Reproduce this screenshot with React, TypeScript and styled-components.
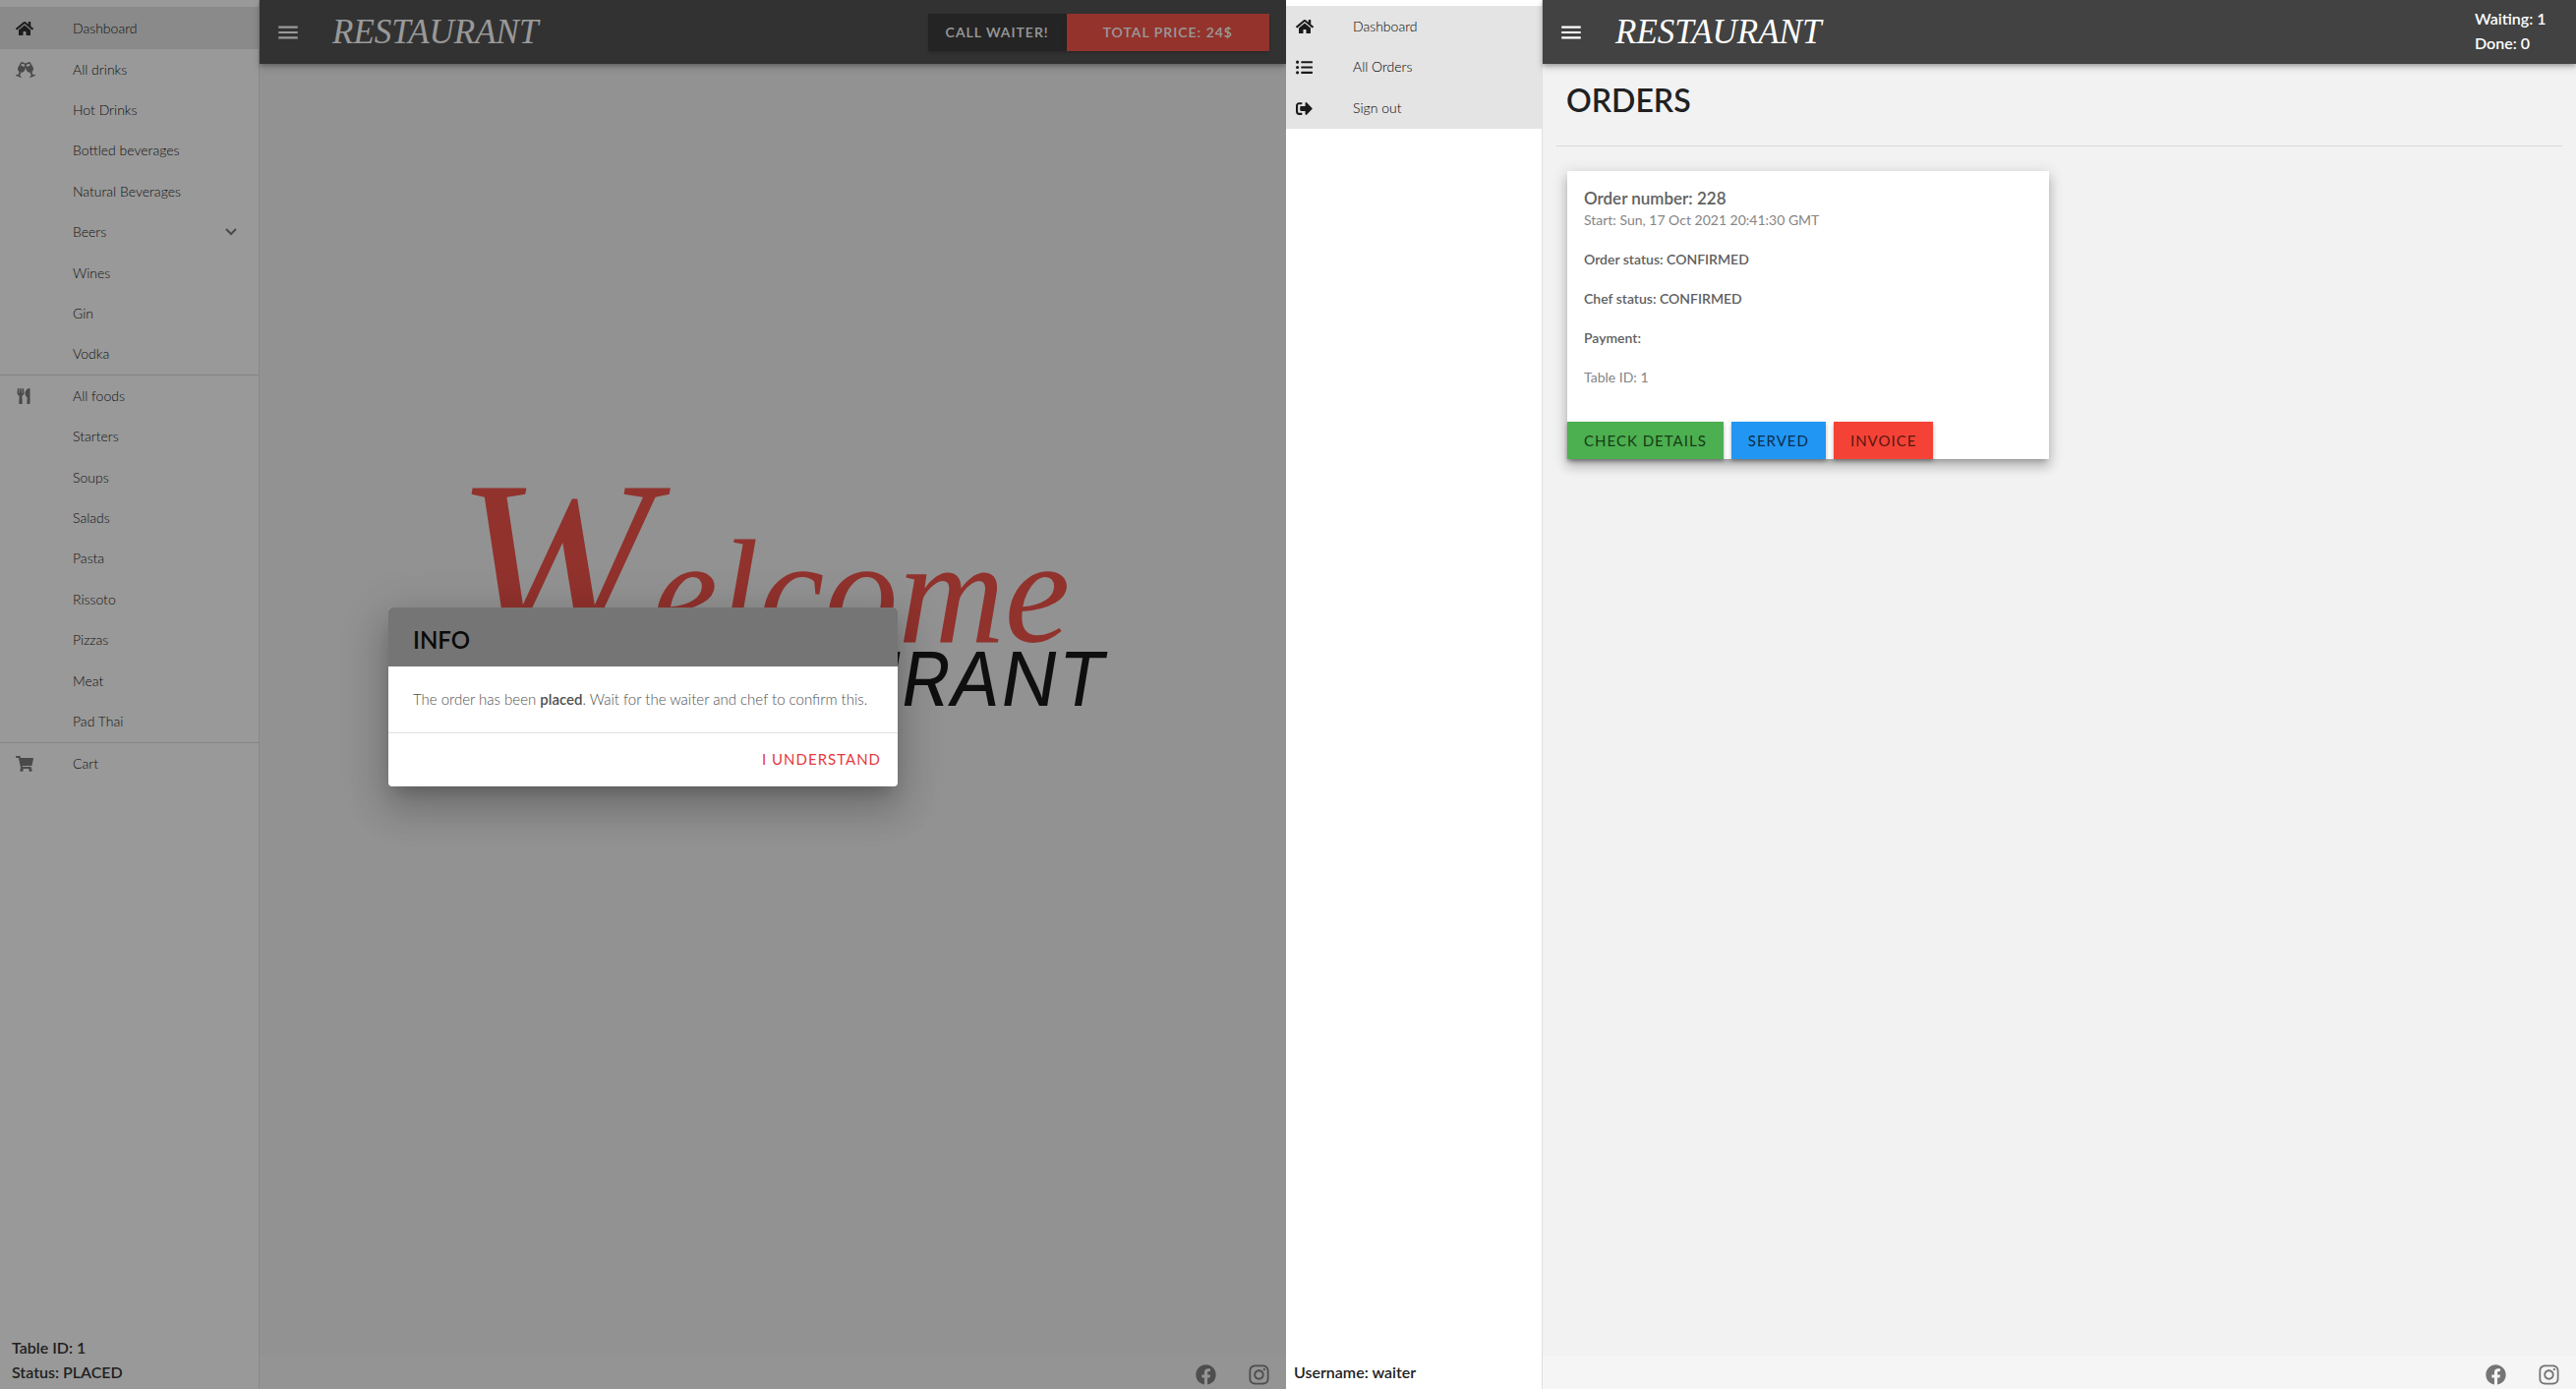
import React from "react";
import styled, { createGlobalStyle } from "styled-components";
import {
  FaHome,
  FaGlassCheers,
  FaUtensils,
  FaShoppingCart,
  FaListUl,
  FaSignOutAlt,
  FaFacebook,
  FaInstagram,
} from "react-icons/fa";
import { MdMenu } from "react-icons/md";

const GlobalStyle = createGlobalStyle`
  *, *::before, *::after { box-sizing: border-box; }
  body {
    margin: 0;
    background: #ffffff;
    font-family: Lato, "Open Sans", "Liberation Sans", sans-serif;
    color: #212121;
  }
  h1, h2, h3, p, ul { margin: 0; padding: 0; font-weight: inherit; }
  ul { list-style: none; }
  button { font-family: inherit; border: 0; cursor: pointer; }
  a { color: inherit; text-decoration: none; }
`;

const Screens = styled.div`
  display: grid;
  grid-template-columns: 1308fr 1312fr;
  min-height: 100vh;
`;

const Screen = styled.section<{ $side: number }>`
  position: relative;
  display: grid;
  grid-template-columns: ${(p) => p.$side}px minmax(0, 1fr);
`;

const Sidebar = styled.aside<{ $top: number }>`
  display: flex;
  flex-direction: column;
  justify-content: space-between;
  padding-top: ${(p) => p.$top}px;
  background: #ffffff;
  border-right: 1px solid #e0e0e0;
`;

const MenuGroup = styled.ul<{ $height: number; $filled?: boolean; $divided?: boolean }>`
  display: grid;
  grid-auto-rows: 1fr;
  height: ${(p) => p.$height}px;
  background: ${(p) => (p.$filled ? "#e4e4e4" : "transparent")};
  border-bottom: ${(p) => (p.$divided ? "1px solid #d8d8d8" : "0")};
`;

const MenuLink = styled.a<{ $inset: number; $strong?: boolean }>`
  display: grid;
  grid-template-columns: 58px 1fr auto;
  align-items: center;
  height: 100%;
  padding: 0 22px 0 ${(p) => p.$inset}px;
  font-size: 14px;
  line-height: 20px;
  font-weight: 300;
  color: #000000;

  svg {
    display: block;
    color: ${(p) => (p.$strong ? "#1a1a1a" : "#6e6e6e")};
  }
`;

const SideNote = styled.div<{ $inset: number }>`
  padding: 0 ${(p) => p.$inset}px 5px;
  font-size: 16px;
  line-height: 25px;
  font-weight: 600;
`;

const Main = styled.div`
  display: flex;
  flex-direction: column;
  min-width: 0;
  background: #f2f2f2;
`;

const AppBar = styled.header`
  display: flex;
  align-items: center;
  height: 65px;
  padding: 0 17px 0 16px;
  background: #424242;
  color: #ffffff;
  box-shadow: 0 2px 4px rgba(0, 0, 0, 0.25), 0 4px 8px rgba(0, 0, 0, 0.15);
`;

const MenuButton = styled.button`
  display: flex;
  padding: 0;
  background: transparent;
  color: inherit;
`;

const Brand = styled.a`
  margin: 0 auto 0 32px;
  font-family: "Liberation Serif", serif;
  font-style: italic;
  font-size: 35px;
  line-height: 40px;
`;

const BarActions = styled.div`
  display: flex;
`;

const Button = styled.button<{ $bg: string; $ink: string }>`
  height: 38px;
  padding: 0 17px;
  background: ${(p) => p.$bg};
  color: ${(p) => p.$ink};
  font-size: 15px;
  letter-spacing: 1px;
  text-transform: uppercase;
  white-space: nowrap;
  box-shadow: 0 2px 4px rgba(0, 0, 0, 0.3);
`;

const BarButton = styled(Button)<{ $wide?: boolean }>`
  padding: 0 ${(p) => (p.$wide ? 37 : 18)}px;
  font-size: 14px;
  font-weight: 600;
`;

const Counters = styled.div`
  width: 86px;
  padding-bottom: 4px;
  font-size: 16px;
  line-height: 25px;
  font-weight: 600;
`;

const Hero = styled.div`
  flex: 1;
  display: flex;
  flex-direction: column;
  align-items: center;
  padding-top: 457px;
`;

const HeroArt = styled.h1`
  display: flex;
  flex-direction: column;
  align-items: flex-end;
  padding-left: 16px;
`;

const Welcome = styled.span`
  display: block;
  padding-right: 36px;
  font-family: "Liberation Serif", serif;
  font-style: italic;
  font-size: 150px;
  line-height: 100px;
  color: #f04238;

  &::first-letter {
    font-size: 240px;
    line-height: 100px;
  }
`;

const HeroName = styled.span`
  display: block;
  font-family: Inter, "Liberation Sans", sans-serif;
  font-size: 76px;
  line-height: 76px;
  font-style: italic;
  font-weight: 400;
  color: #000000;
`;

const Footer = styled.footer`
  display: flex;
  justify-content: flex-end;
  align-items: center;
  gap: 32px;
  height: 34px;
  margin-top: auto;
  padding: 4px 16px 0;
  background: #f5f5f5;
  color: #757575;

  a { display: flex; }
`;

const Scrim = styled.div`
  position: absolute;
  inset: 0;
  display: flex;
  align-items: center;
  justify-content: center;
  padding-top: 5px;
  background: rgba(33, 33, 33, 0.46);
`;

const Dialog = styled.div`
  width: 518px;
  background: #ffffff;
  border-radius: 4px;
  overflow: hidden;
  box-shadow: 0 11px 15px -7px rgba(0, 0, 0, 0.2), 0 24px 38px 3px rgba(0, 0, 0, 0.14),
    0 9px 46px 8px rgba(0, 0, 0, 0.12);
`;

const DialogTitle = styled.h2`
  height: 60px;
  padding: 6px 25px 0;
  background: #757575;
  color: #0a0a0a;
  font-size: 24px;
  line-height: 54px;
  font-weight: 600;
`;

const DialogText = styled.p`
  padding: 22px 25px;
  border-bottom: 1px solid #e0e0e0;
  font-size: 15px;
  line-height: 23px;
  font-weight: 300;
  color: #505050;
  white-space: nowrap;

  strong { font-weight: 600; }
`;

const DialogActions = styled.div`
  display: flex;
  justify-content: flex-end;
  padding: 7px 8px 9px;
`;

const TextButton = styled.button`
  height: 38px;
  padding: 0 9px;
  background: transparent;
  color: #e5393c;
  font-size: 15px;
  letter-spacing: 1px;
`;

const Orders = styled.main`
  padding: 17px 14px;
`;

const OrdersTitle = styled.h1`
  padding: 0 10px 26px;
  border-bottom: 1px solid #d8d8d8;
  font-size: 32px;
  line-height: 40px;
  font-weight: 600;
`;

const OrderCard = styled.article`
  width: 490px;
  margin: 25px 11px;
  background: #ffffff;
  box-shadow: 0 5px 5px -3px rgba(0, 0, 0, 0.2), 0 8px 10px 1px rgba(0, 0, 0, 0.14),
    0 3px 14px 2px rgba(0, 0, 0, 0.12);
`;

const CardBody = styled.div`
  display: flex;
  flex-direction: column;
  padding: 16px 17px 35px;
`;

const CardTitle = styled.h2`
  font-size: 17px;
  line-height: 24px;
  font-weight: 600;
  color: #606060;
`;

const CardLine = styled.p<{ $bold?: boolean; $first?: boolean }>`
  margin-top: ${(p) => (p.$first ? 0 : 20)}px;
  font-size: 14px;
  line-height: 20px;
  font-weight: ${(p) => (p.$bold ? 600 : 400)};
  color: ${(p) => (p.$bold ? "#606060" : "#858585")};
`;

const CardActions = styled.div`
  display: flex;
  gap: 8px;
`;

type Item = { label: string; icon?: React.ReactNode; open?: boolean };

const drinks: Item[] = [
  { label: "All drinks", icon: <FaGlassCheers size={20} /> },
  { label: "Hot Drinks" },
  { label: "Bottled beverages" },
  { label: "Natural Beverages" },
  { label: "Beers", open: true },
  { label: "Wines" },
  { label: "Gin" },
  { label: "Vodka" },
];

const foods: Item[] = [
  { label: "All foods", icon: <FaUtensils size={16} /> },
  { label: "Starters" },
  { label: "Soups" },
  { label: "Salads" },
  { label: "Pasta" },
  { label: "Rissoto" },
  { label: "Pizzas" },
  { label: "Meat" },
  { label: "Pad Thai" },
];

const waiterItems: Item[] = [
  { label: "Dashboard", icon: <FaHome size={18} /> },
  { label: "All Orders", icon: <FaListUl size={17} /> },
  { label: "Sign out", icon: <FaSignOutAlt size={17} /> },
];

const Chevron = () => (
  <svg width="12" height="8" viewBox="0 0 12 8" fill="none" stroke="currentColor" strokeWidth="2">
    <path d="M1 1l5 5 5-5" />
  </svg>
);

function Menu(props: {
  items: Item[];
  height: number;
  inset: number;
  filled?: boolean;
  divided?: boolean;
  strong?: boolean;
}) {
  return (
    <MenuGroup $height={props.height} $filled={props.filled} $divided={props.divided}>
      {props.items.map((item) => (
        <li key={item.label}>
          <MenuLink href="#" $inset={props.inset} $strong={props.strong}>
            <span>{item.icon}</span>
            <span>{item.label}</span>
            {item.open && <Chevron />}
          </MenuLink>
        </li>
      ))}
    </MenuGroup>
  );
}

const Social = () => (
  <Footer>
    <a href="#" aria-label="Facebook">
      <FaFacebook size={21} />
    </a>
    <a href="#" aria-label="Instagram">
      <FaInstagram size={23} />
    </a>
  </Footer>
);

const BarStart = () => (
  <>
    <MenuButton aria-label="Menu">
      <MdMenu size={26} />
    </MenuButton>
    <Brand href="#">RESTAURANT</Brand>
  </>
);

export default function App() {
  return (
    <>
      <GlobalStyle />
      <Screens>
        <Screen $side={264}>
          <Sidebar $top={7}>
            <nav>
              <Menu items={[{ label: "Dashboard", icon: <FaHome size={18} /> }]} height={43} inset={16} filled strong />
              <Menu items={drinks} height={332} inset={16} divided />
              <Menu items={foods} height={374} inset={16} divided />
              <Menu items={[{ label: "Cart", icon: <FaShoppingCart size={18} /> }]} height={42} inset={16} />
            </nav>
            <SideNote $inset={12}>
              <p>Table ID: 1</p>
              <p>Status: PLACED</p>
            </SideNote>
          </Sidebar>
          <Main>
            <AppBar>
              <BarStart />
              <BarActions>
                <BarButton $bg="#272727" $ink="#ffffff">
                  Call waiter!
                </BarButton>
                <BarButton $bg="#f44336" $ink="#ffffff" $wide>
                  Total price: 24$
                </BarButton>
              </BarActions>
            </AppBar>
            <Hero>
              <HeroArt>
                <Welcome>Welcome</Welcome>
                <HeroName>RESTAURANT</HeroName>
              </HeroArt>
            </Hero>
            <Social />
          </Main>
          <Scrim>
            <Dialog role="dialog" aria-labelledby="info-title">
              <DialogTitle id="info-title">INFO</DialogTitle>
              <DialogText>
                The order has been <strong>placed</strong>. Wait for the waiter and chef to confirm this.
              </DialogText>
              <DialogActions>
                <TextButton>I UNDERSTAND</TextButton>
              </DialogActions>
            </Dialog>
          </Scrim>
        </Screen>
        <Screen $side={261}>
          <Sidebar $top={6}>
            <nav>
              <Menu items={waiterItems} height={125} inset={10} filled strong />
            </nav>
            <SideNote $inset={8}>
              <p>Username: waiter</p>
            </SideNote>
          </Sidebar>
          <Main>
            <AppBar>
              <BarStart />
              <Counters>
                <p>Waiting: 1</p>
                <p>Done: 0</p>
              </Counters>
            </AppBar>
            <Orders>
              <OrdersTitle>ORDERS</OrdersTitle>
              <OrderCard>
                <CardBody>
                  <CardTitle>Order number: 228</CardTitle>
                  <CardLine $first>Start: Sun, 17 Oct 2021 20:41:30 GMT</CardLine>
                  <CardLine $bold>Order status: CONFIRMED</CardLine>
                  <CardLine $bold>Chef status: CONFIRMED</CardLine>
                  <CardLine $bold>Payment:</CardLine>
                  <CardLine>Table ID: 1</CardLine>
                </CardBody>
                <CardActions>
                  <Button $bg="#4caf50" $ink="#143d16">
                    Check details
                  </Button>
                  <Button $bg="#2196f3" $ink="#0b2f4d">
                    Served
                  </Button>
                  <Button $bg="#f44336" $ink="#5a1611">
                    Invoice
                  </Button>
                </CardActions>
              </OrderCard>
            </Orders>
            <Social />
          </Main>
        </Screen>
      </Screens>
    </>
  );
}
